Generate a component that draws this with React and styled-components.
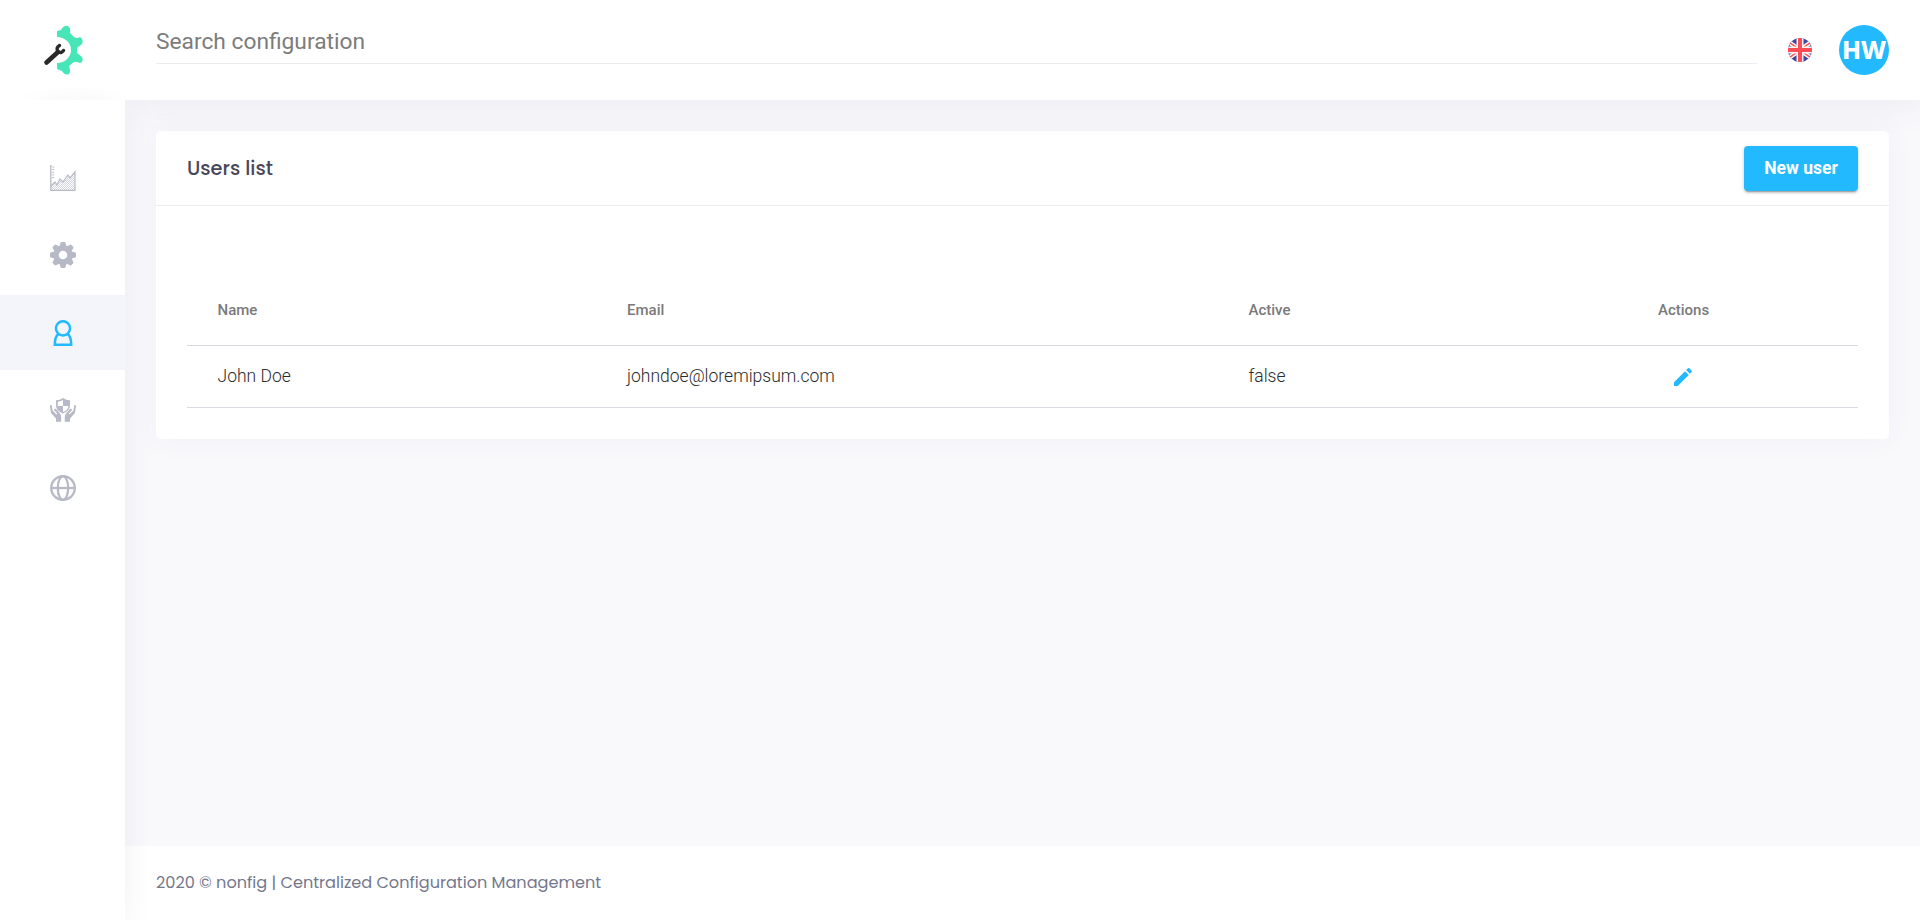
import React, { Component } from "react";
import styled, { createGlobalStyle } from "styled-components";
import { MdEdit } from "react-icons/md";

const GlobalStyle = createGlobalStyle`
	*, *::before, *::after {
		box-sizing: border-box;
	}
	body {
		margin: 0;
		background: #f9f9fc;
		font-family: Roboto, sans-serif;
		overflow: hidden;
	}
`;
const Page = styled.div`
	display: grid;
	grid-template-columns: 125px 1fr;
	grid-template-rows: 100px 1fr 74px;
	height: 100vh;
`;
const Brand = styled.div`
	display: flex;
	align-items: center;
	justify-content: center;
	background: radial-gradient(ellipse 62px 15px at 76px 100%, #fafafa, #ffffff);
	z-index: 4;
`;
const Header = styled.header`
	display: flex;
	align-items: center;
	padding: 0 31px;
	background: #ffffff;
	box-shadow: 0 0 40px 0 rgba(82, 63, 105, 0.1);
	z-index: 2;
`;
const Search = styled.input`
	flex: 1;
	height: 44px;
	margin-bottom: 16px;
	padding: 0 0 1px;
	border: 0;
	border-bottom: 1px solid #ebedf2;
	outline: 0;
	font-family: Roboto, sans-serif;
	font-size: 22.75px;
	color: #757575;
	&::placeholder {
		color: #7c7c7c;
	}
`;
const Language = styled.div`
	display: flex;
	width: 24px;
	height: 24px;
	margin: 0 27px 0 31px;
`;
const Avatar = styled.div`
	display: flex;
	align-items: center;
	justify-content: center;
	width: 50px;
	height: 50px;
	padding-bottom: 2px;
	border-radius: 50%;
	background: #22b9ff;
	color: #ffffff;
	font-family: "Noto Sans", sans-serif;
	font-size: 25px;
	font-weight: 800;
`;
const Aside = styled.nav`
	display: flex;
	flex-direction: column;
	grid-row: 2 / 4;
	gap: 2.5px;
	padding-top: 40px;
	background: #ffffff;
	box-shadow: 0 0 28px 0 rgba(82, 63, 105, 0.08);
	clip-path: inset(0 -40px 0 0);
	z-index: 3;
`;
const AsideItem = styled.a`
	display: flex;
	align-items: center;
	justify-content: center;
	height: 75px;
	background: ${props => (props.$active ? "#f4f5fb" : "transparent")};
	color: ${props => (props.$active ? "#22b9ff" : "#b7bac6")};
`;
const Content = styled.main`
	padding: 31px;
`;
const Card = styled.section`
	display: flex;
	flex-direction: column;
	height: 308px;
	border-radius: 5px;
	background: #ffffff;
	box-shadow: 0 0 30px 0 rgba(82, 63, 105, 0.05);
`;
const CardHead = styled.div`
	display: flex;
	align-items: center;
	justify-content: space-between;
	height: 75px;
	padding: 0 31px;
	border-bottom: 1px solid #ebedf2;
`;
const CardTitle = styled.h3`
	margin: 0;
	font-family: Poppins, Inter, sans-serif;
	font-size: 19.3px;
	font-weight: 500;
	color: #48465b;
`;
const NewButton = styled.button`
	width: 114px;
	height: 45px;
	padding: 0;
	border: 0;
	border-radius: 4px;
	background: #22b9ff;
	box-shadow: 0 3px 1px -2px rgba(0, 0, 0, 0.2), 0 2px 2px 0 rgba(0, 0, 0, 0.14), 0 1px 5px 0 rgba(0, 0, 0, 0.12);
	color: #ffffff;
	font-family: Roboto, sans-serif;
	font-size: 17.5px;
	font-weight: 700;
`;
const Table = styled.div`
	display: flex;
	flex-direction: column;
	padding: 70px 31px 0;
`;
const Row = styled.div`
	display: grid;
	grid-template-columns: 409.5px 621.5px 409.5px 1fr;
	align-items: center;
	height: ${props => (props.$head ? 70 : 62)}px;
	border-bottom: 1px solid #d9d9e5;
	font-size: ${props => (props.$head ? 15 : 17.5)}px;
	font-weight: ${props => (props.$head ? 500 : 300)};
	color: ${props => (props.$head ? "#7a7a7a" : "#2b2b2b")};
`;
const Cell = styled.div`
	display: flex;
	padding: 0 0 2px 30.5px;
`;
const EditButton = styled.button`
	display: flex;
	padding: 2px 12px 0 13px;
	border: 0;
	background: none;
	color: #22b9ff;
`;
const Footer = styled.footer`
	display: flex;
	align-items: center;
	grid-column: 2;
	padding: 0 0 2px 31px;
	background: #ffffff;
	font-family: Poppins, Inter, sans-serif;
	font-size: 16.13px;
	color: #74788d;
`;

const Logo = () => (
	<svg width="40" height="50" viewBox="0 0 40 50">
		<path
			fill="#46e6b8"
			d="M14 6 18 5Q21 0 25 1Q28 3 27 8L31 12Q34 14 37 12Q41 14 39 19L34 23V28L39 32Q41 37 37 38Q33 36 31 37L26 41Q28 46 26 49Q22 51 19 46L14 44V38A14 13 0 0 0 14 12Z"
		/>
		<path stroke="#292929" strokeWidth="4.6" strokeLinecap="round" d="M3.5 37.5 15 27" />
		<path stroke="#292929" strokeWidth="3.4" fill="none" strokeLinecap="round" d="M16.5 20.5Q12.500 23 15 26.5Q18 29 20.500 25.500" />
	</svg>
);
const Flag = () => (
	<svg width="24" height="24" viewBox="0 0 24 24">
		<defs>
			<clipPath id="round"><circle cx="12" cy="12" r="12" /></clipPath>
		</defs>
		<g clipPath="url(#round)">
			<path fill="#41479b" d="M0 0H24V24H0Z" />
			<path stroke="#f5f5f5" strokeWidth="4.4" d="M-2 2 26 22M26 2-2 22" />
			<path stroke="#ff4b55" strokeWidth="1.4" d="M-2 2 26 22M26 2-2 22" />
			<path stroke="#f5f5f5" strokeWidth="7" d="M12 0V24M0 12H24" />
			<path stroke="#ff4b55" strokeWidth="4" d="M12 0V24M0 12H24" />
		</g>
	</svg>
);
const ChartIcon = () => (
	<svg width="26" height="26" viewBox="0 0 26 26" fill="none" stroke="currentColor">
		<defs>
			<pattern id="dots" width="2" height="2" patternUnits="userSpaceOnUse">
				<path stroke="none" fill="currentColor" opacity=".6" d="M0 0H1V1H0ZM1 1H2V2H1Z" />
			</pattern>
		</defs>
		<path stroke="none" fill="url(#dots)" d="M1 21 5 17 7 20 10 14 13 17 18 10 20 13 25 7V25H1Z" />
		<path d="M1 21 5 17 7 20 10 14 13 17 18 10 20 13 25 7V25" strokeWidth="1.2" />
		<path d="M.8 0V25.3H25.5" strokeWidth="1.3" />
		<path d="M3.2 1.5V14" strokeWidth="2" strokeDasharray="1 1.6" />
	</svg>
);
const GearIcon = () => (
	<svg width="26" height="26" viewBox="-13 -13 26 26" fill="currentColor">
		<circle r="7" fill="none" stroke="currentColor" strokeWidth="5.4" />
		{[0, 45, 90, 135, 180, 225, 270, 315].map(angle => (
			<path key={angle} transform={`rotate(${angle})`} d="M-3.600-8.500-2.400-12.200Q-2.200-13-1.500-13H1.500Q2.200-13 2.400-12.200L3.600-8.500Z" />
		))}
	</svg>
);
const UserIcon = () => (
	<svg width="26" height="26" viewBox="0 0 26 26" fill="none" stroke="currentColor" strokeWidth="2.5">
		<circle cx="13" cy="8.3" r="7.1" />
		<path d="M8.3 14Q4.8 17 4.8 24.700H21.2Q21.2 17 17.7 14" />
	</svg>
);
const ShieldIcon = () => (
	<svg width="26" height="26" viewBox="0 0 26 26" fill="currentColor">
		<path fillRule="evenodd" d="M13 1Q16 3.200 20 3.200V8.500Q20 14 13 16.600Q6 14 6 8.500V3.200Q10 3.200 13 1ZM13 3Q10.500 4.600 7.700 4.700V9H13ZM13 9V15Q18.300 13 18.400 9Z" />
		<path d="M0 8.500Q.8 7.300 1.800 8.500L2.600 13.500 6.500 17.500 7.300 16.800 3.800 12.800Q4.500 11 6 12L10 16.500Q11.200 18 11.200 20V24.800H6V21.500L1 16Z" />
		<path d="M26 8.500Q25.200 7.300 24.200 8.500L23.400 13.500 19.500 17.500 18.700 16.800 22.200 12.800Q21.500 11 20 12L16 16.500Q14.800 18 14.800 20V24.800H20V21.500L25 16Z" />
	</svg>
);
const GlobeIcon = () => (
	<svg width="26" height="26" viewBox="0 0 26 26" fill="none" stroke="currentColor" strokeWidth="2.3">
		<circle cx="13" cy="13" r="11.800" />
		<ellipse cx="13" cy="13" rx="5.200" ry="11.800" />
		<path d="M1 13H25" />
	</svg>
);

const menu = [
	{ name: "dashboard", icon: <ChartIcon /> },
	{ name: "settings", icon: <GearIcon /> },
	{ name: "users", icon: <UserIcon /> },
	{ name: "security", icon: <ShieldIcon /> },
	{ name: "locales", icon: <GlobeIcon /> }
];
const users = [{ name: "John Doe", email: "johndoe@loremipsum.com", active: false }];

class App extends Component {
	state = { selected: "users" };

	render() {
		const { selected } = this.state;
		return (
			<React.Fragment>
				<GlobalStyle />
				<Page>
					<Brand><Logo /></Brand>
					<Header>
						<Search placeholder="Search configuration" />
						<Language><Flag /></Language>
						<Avatar>HW</Avatar>
					</Header>
					<Aside>
						{menu.map(({ name, icon }) => (
							<AsideItem key={name} $active={name === selected} onClick={() => this.setState({ selected: name })}>
								{icon}
							</AsideItem>
						))}
					</Aside>
					<Content>
						<Card>
							<CardHead>
								<CardTitle>Users list</CardTitle>
								<NewButton>New user</NewButton>
							</CardHead>
							<Table>
								<Row $head>
									<Cell>Name</Cell>
									<Cell>Email</Cell>
									<Cell>Active</Cell>
									<Cell>Actions</Cell>
								</Row>
								{users.map(user => (
									<Row key={user.email}>
										<Cell>{user.name}</Cell>
										<Cell>{user.email}</Cell>
										<Cell>{`${user.active}`}</Cell>
										<Cell>
											<EditButton><MdEdit size={24} /></EditButton>
										</Cell>
									</Row>
								))}
							</Table>
						</Card>
					</Content>
					<Footer>2020 © nonfig | Centralized Configuration Management</Footer>
				</Page>
			</React.Fragment>
		);
	}
}
export default App;
